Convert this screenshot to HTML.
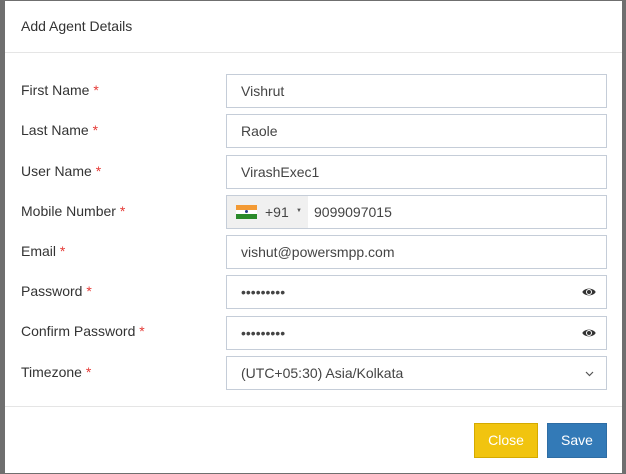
<!DOCTYPE html>
<html><head><style>
*{box-sizing:border-box;margin:0;padding:0}
body{width:626px;height:474px;background:#6f6f6f;font-family:"Liberation Sans",sans-serif;position:relative;overflow:hidden}
.m{position:absolute;left:5px;top:1px;width:617px;height:472px;background:#fff}
.h{position:absolute;left:16px;top:17px;font-size:14px;color:#333}
.hl{position:absolute;left:0;right:0;top:51px;border-top:1px solid #e5e5e5}
.fl{position:absolute;left:0;right:0;top:405px;border-top:1px solid #e5e5e5}
.lab{position:absolute;left:16px;font-size:14px;color:#333}
.lab b{color:#e53935;font-weight:normal}
.in{position:absolute;left:221px;width:381px;height:34px;border:1px solid #c5cdd8;font-size:14px;color:#444;padding:8px 0 0 14px}
.eye{position:absolute;right:10px;top:11px}
.btn{position:absolute;top:422px;height:35px;font-size:14px;color:#fff;text-align:center;line-height:33px}
</style></head><body>
<div class="m">
<div class="h">Add Agent Details</div><div class="hl"></div>
<div class="lab" style="top:81px">First Name <b>*</b></div>
<div class="in" style="top:73px">Vishrut</div>
<div class="lab" style="top:121px">Last Name <b>*</b></div>
<div class="in" style="top:113px">Raole</div>
<div class="lab" style="top:162px">User Name <b>*</b></div>
<div class="in" style="top:154px">VirashExec1</div>
<div class="lab" style="top:202px">Mobile Number <b>*</b></div>
<div class="in" style="top:194px;padding:0">
<div style="position:absolute;left:0;top:0;width:81px;height:32px;background:#f0f0f0"></div>
<div style="position:absolute;left:9px;top:9px;width:21px;height:14px"><div style="height:5px;background:#f39a34"></div><div style="height:4px;background:#fff;position:relative"><div style="position:absolute;left:9px;top:0;width:3px;height:3px;border-radius:50%;background:#2a3c8a"></div></div><div style="height:5px;background:#2a8a2a"></div></div>
<span style="position:absolute;left:38px;top:8px">+91</span>
<span style="position:absolute;left:69px;top:12px;font-size:6px;color:#555">▼</span>
<span style="position:absolute;left:87px;top:8px">9099097015</span></div>
<div class="lab" style="top:242px">Email <b>*</b></div>
<div class="in" style="top:234px">vishut@powersmpp.com</div>
<div class="lab" style="top:282px">Password <b>*</b></div>
<div class="in" style="top:274px">•••••••••<svg class="eye" width="14" height="10" viewBox="0 0 14 10"><path d="M0.3 5C2.5 0.5 11.5 0.5 13.7 5C11.5 9.5 2.5 9.5 0.3 5Z" fill="#333"/><circle cx="7" cy="5" r="3" fill="#fff"/><circle cx="7" cy="5" r="2" fill="#333"/></svg></div>
<div class="lab" style="top:322px">Confirm Password <b>*</b></div>
<div class="in" style="top:315px">•••••••••<svg class="eye" width="14" height="10" viewBox="0 0 14 10"><path d="M0.3 5C2.5 0.5 11.5 0.5 13.7 5C11.5 9.5 2.5 9.5 0.3 5Z" fill="#333"/><circle cx="7" cy="5" r="3" fill="#fff"/><circle cx="7" cy="5" r="2" fill="#333"/></svg></div>
<div class="lab" style="top:363px">Timezone <b>*</b></div>
<div class="in" style="top:355px">(UTC+05:30) Asia/Kolkata<svg style="position:absolute;right:12px;top:14px" width="9" height="6" viewBox="0 0 9 6"><path d="M1 1L4.5 4.5L8 1" stroke="#555" fill="none" stroke-width="1.2"/></svg></div>
<div class="fl"></div>
<div class="btn" style="left:469px;width:64px;background:#f1c40f;border:1px solid #d4aa00">Close</div>
<div class="btn" style="left:542px;width:60px;background:#337ab7;border:1px solid #2e6da4">Save</div>
</div>
</body></html>
